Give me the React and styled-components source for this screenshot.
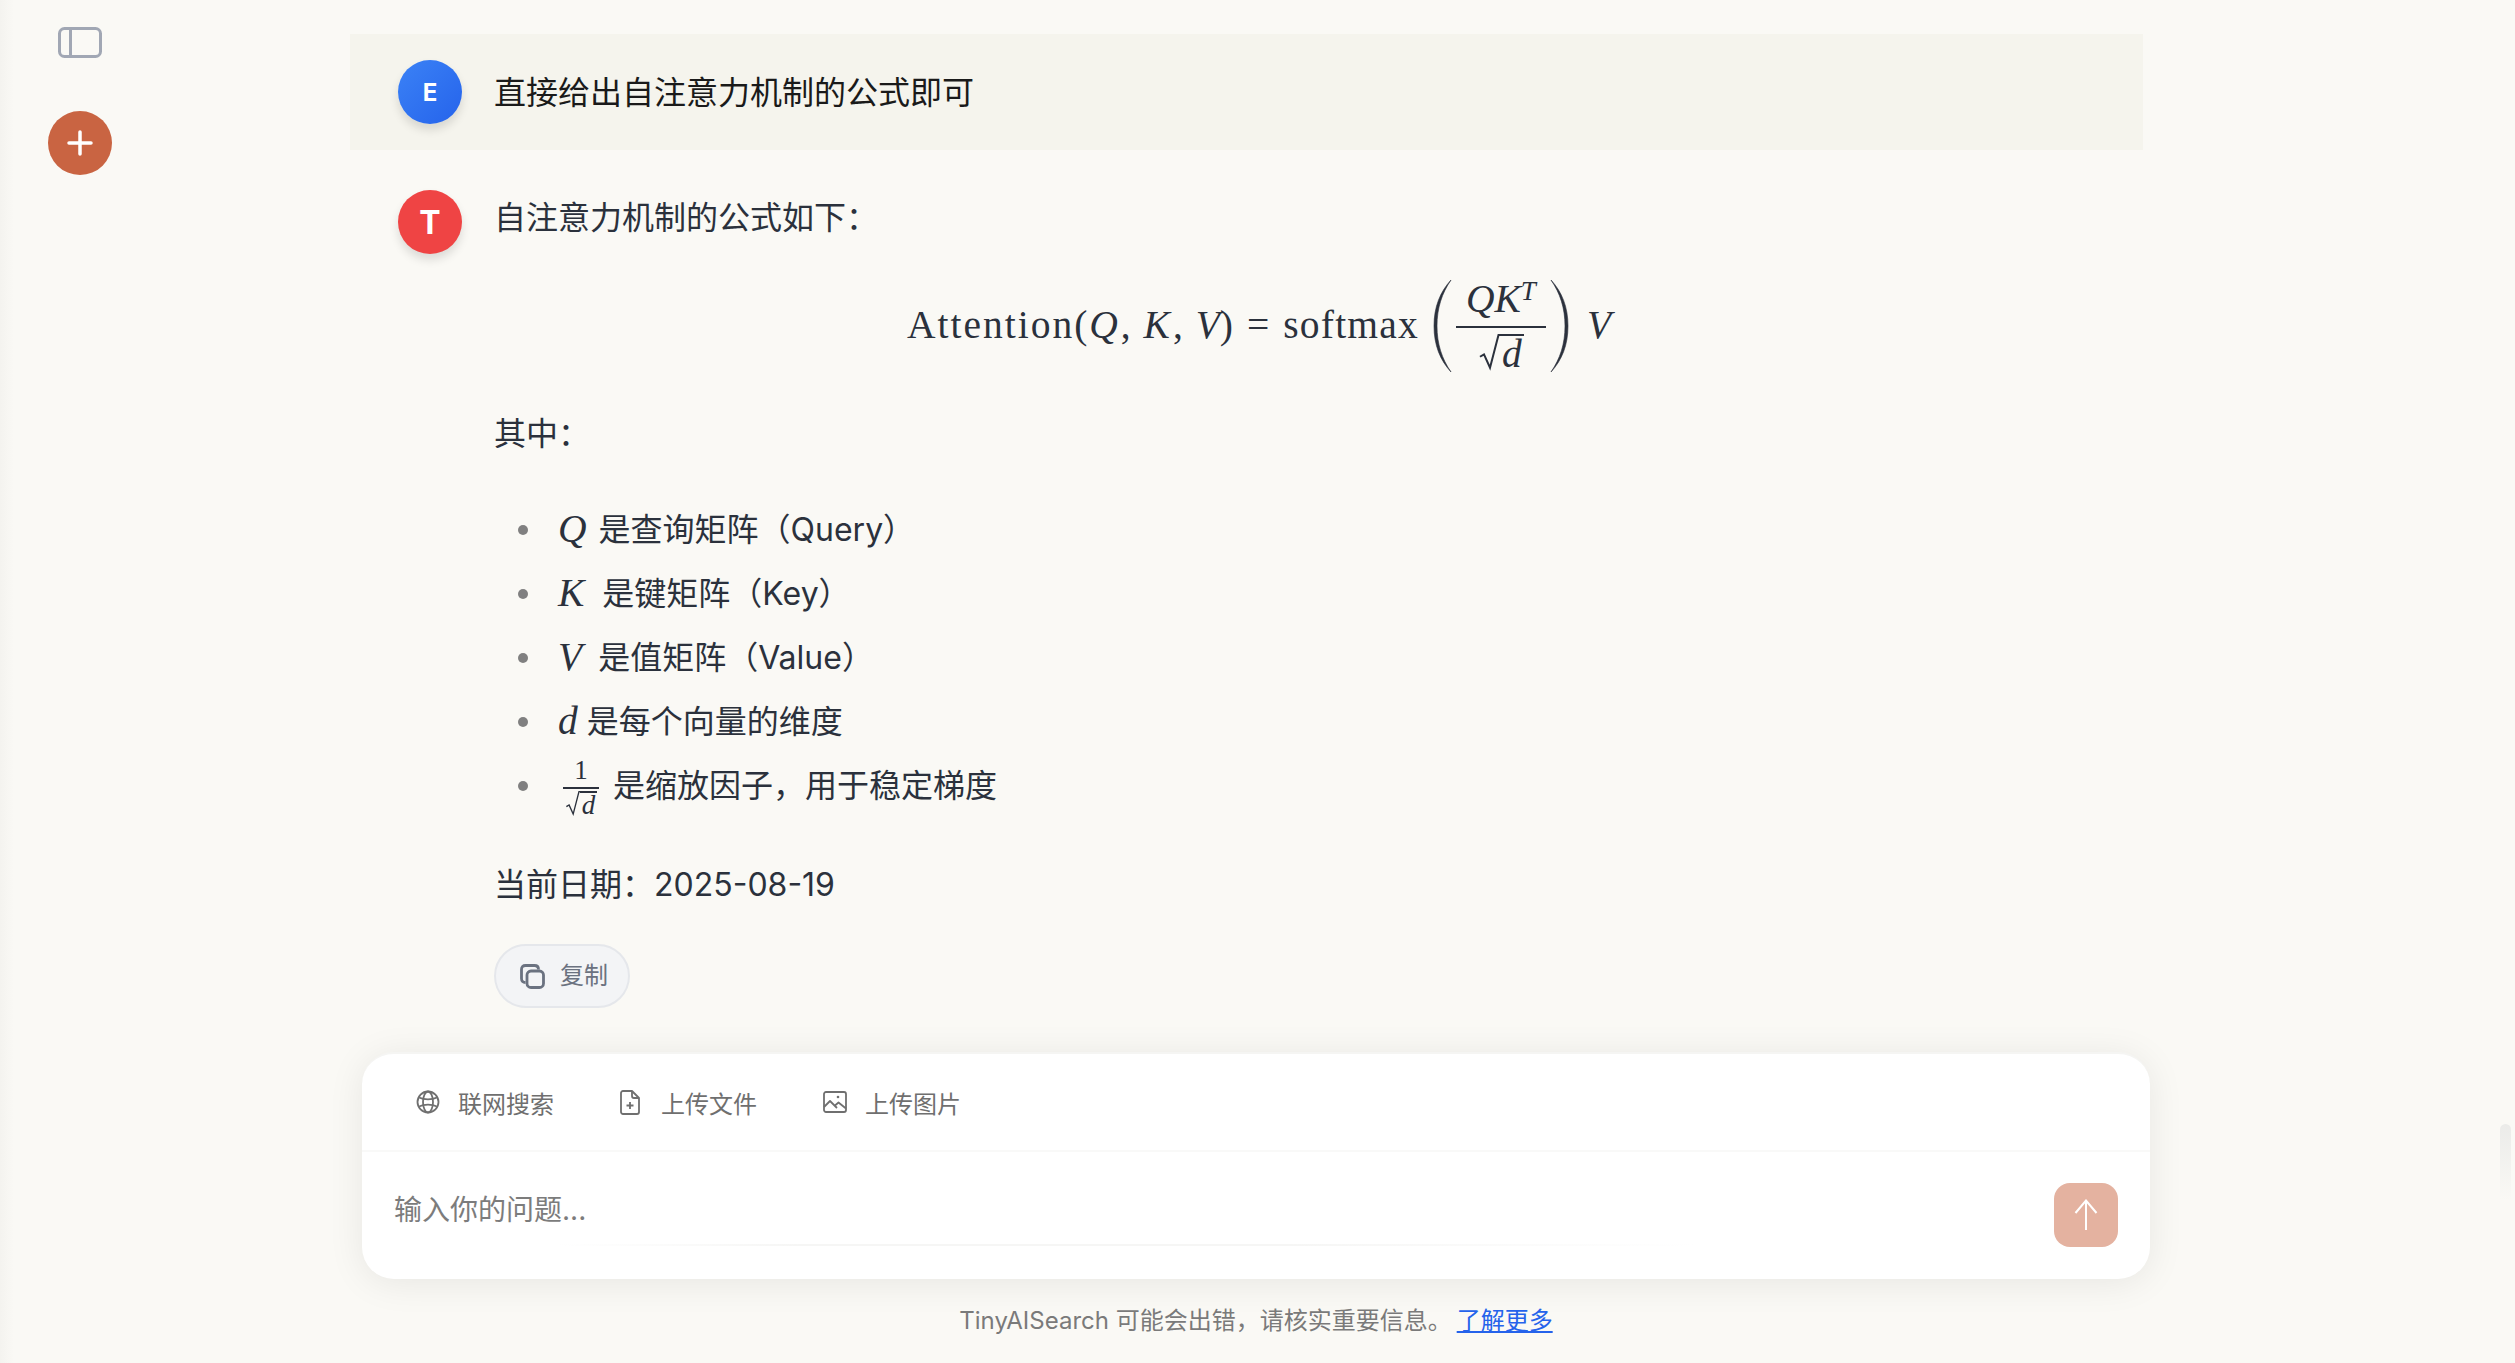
import React from "react";
import styled, { createGlobalStyle } from "styled-components";

const GlobalStyle = createGlobalStyle`
  html, body {
    margin: 0;
    padding: 0;
    height: 100%;
    background: #faf9f5;
    overflow: hidden;
  }
  body {
    font-family: Inter, "Noto Sans CJK SC", sans-serif;
    color: #1f2937;
  }
  #root { height: 100%; }
  * { box-sizing: border-box; }
`;

const Page = styled.div`
  position: relative;
  display: flex;
  width: 100%;
  height: 100vh;
  overflow: hidden;
  background: #faf9f5;
`;

const Sidebar = styled.aside`
  flex: 0 0 160px;
  display: flex;
  flex-direction: column;
  align-items: center;
  padding-top: 27px;
  gap: 53px;
  background: linear-gradient(to right, #f4f3ef 0, #faf9f5 14px);
`;

const ToggleButton = styled.div`
  display: flex;
  height: 31px;
  color: #a1a7b4;
`;

const NewChatButton = styled.div`
  width: 64px;
  height: 64px;
  border-radius: 50%;
  background: #c96442;
  color: #fff;
  display: flex;
  align-items: center;
  justify-content: center;
`;

const Main = styled.main`
  flex: 1;
  min-width: 0;
  display: flex;
  flex-direction: column;
`;

const ChatArea = styled.div`
  flex: 1;
  min-height: 0;
  padding: 34px 0 0 190px;
`;

const UserBanner = styled.div`
  width: 1793px;
  height: 116px;
  padding: 26px 48px;
  display: flex;
  gap: 32px;
  background: #f5f4ed;
`;

const Avatar = styled.div`
  flex: 0 0 64px;
  width: 64px;
  height: 64px;
  border-radius: 50%;
  display: flex;
  align-items: center;
  justify-content: center;
  color: #fff;
  font-weight: 700;
  font-size: ${(p) => p.$size}px;
  background: ${(p) => p.$bg};
  box-shadow: 0 6px 10px rgba(0, 0, 0, 0.12);
`;

const UserText = styled.div`
  font-size: 32px;
  line-height: 64px;
  color: #1a1a1a;
  padding-top: 1px;
`;

const AnswerRow = styled.div`
  display: flex;
  gap: 32px;
  padding: 40px 48px 0;
`;

const AnswerBody = styled.div`
  width: 1536px;
  font-size: 32px;
  line-height: 52px;
  color: #2b313c;
  padding-top: 2px;
`;

const Para = styled.p`
  margin: ${(p) => p.$top || 0}px 0 0;
`;

const Formula = styled.div`
  height: 106px;
  margin-top: 26px;
  padding: 6px 6px 0 0;
  display: flex;
  align-items: center;
  justify-content: center;
  font-family: "Liberation Serif", serif;
  font-size: 39.5px;
  line-height: 1;
  color: #2b313c;
`;

const Roman = styled.span`
  letter-spacing: ${(p) => p.$spacing || 0}px;
  margin: 0 ${(p) => p.$side || 0}px;
  white-space: pre;
`;

const MathVar = styled.i`
  font-family: "Liberation Serif", serif;
  font-size: ${(p) => p.$size || 39.5}px;
  line-height: 1;
  margin-right: ${(p) => p.$gap || 0}px;
`;

const TrailingVar = styled(MathVar)`
  margin-left: 16px;
`;

const Sup = styled.i`
  font-size: 27px;
  align-self: flex-start;
  margin-top: -3px;
`;

const Fraction = styled.span`
  display: inline-flex;
  flex-direction: column;
  align-items: center;
  width: ${(p) => p.$width}px;
  margin: 0 ${(p) => p.$side || 0}px;
  font-family: "Liberation Serif", serif;
  line-height: 1;
`;

const Numerator = styled.span`
  display: flex;
  justify-content: center;
  align-items: flex-end;
  width: 100%;
  height: ${(p) => p.$height}px;
  border-bottom: 2px solid #2b313c;
  padding-bottom: ${(p) => p.$pad}px;
  font-size: ${(p) => p.$size}px;
`;

const Denominator = styled.span`
  display: flex;
  align-items: flex-start;
  justify-content: center;
  padding-top: ${(p) => p.$pad}px;
`;

const Radicand = styled.i`
  display: block;
  border-top: 2px solid #2b313c;
  font-size: ${(p) => p.$size}px;
  line-height: ${(p) => p.$line}px;
  padding: 0 2px;
`;

const FormulaBlock = styled.span`
  display: inline-flex;
  align-items: center;
  margin-left: ${(p) => p.$left || 0}px;
  padding-top: ${(p) => p.$top || 0}px;
`;

const BulletList = styled.ul`
  list-style: none;
  margin: 44px 0 0;
  padding: 0;
  display: flex;
  flex-direction: column;
  gap: 12px;
`;

const BulletItem = styled.li`
  display: flex;
  align-items: center;
  height: 52px;
  &::before {
    content: "";
    flex: 0 0 10px;
    width: 10px;
    height: 10px;
    border-radius: 50%;
    background: #808080;
    margin: 0 30px 0 24px;
  }
`;

const FractionNote = styled.span`
  margin-left: 14px;
`;

const CopyButton = styled.div`
  display: inline-flex;
  align-items: center;
  gap: 15px;
  height: 64px;
  margin-top: 33px;
  padding: 0 20px 0 24px;
  border: 2px solid #e5e7eb;
  border-radius: 32px;
  background: #f3f4f6;
  color: #6b7280;
  font-size: 24px;
`;

const InputArea = styled.div`
  flex: 0 0 311px;
  width: 1788px;
  margin-left: 202px;
`;

const InputCard = styled.div`
  height: 227px;
  border-radius: 32px;
  background: #fff;
  border-top: 2px solid #f5f5f3;
  box-shadow: 0 4px 36px rgba(0, 0, 0, 0.08);
  display: flex;
  flex-direction: column;
`;

const ToolRow = styled.div`
  height: 98px;
  flex: 0 0 98px;
  display: flex;
  align-items: center;
  gap: 66px;
  padding-left: 54px;
  border-bottom: 2px solid #f9f9f8;
`;

const ToolButton = styled.div`
  display: flex;
  align-items: center;
  gap: ${(p) => p.$gap}px;
  font-size: 24px;
  color: #6f6f6f;
`;

const InputRow = styled.div`
  flex: 1;
  display: flex;
  padding: 31px 32px 31px 32px;
  gap: 32px;
`;

const Placeholder = styled.div`
  flex: 1;
  height: 63px;
  font-size: 28px;
  line-height: 54px;
  color: #7c7c7c;
  border-bottom: 2px solid;
  border-image: linear-gradient(to right, #fff 10%, #f6f6f5 25%, #f6f6f5 55%, #fff 80%) 1;
`;

const SendButton = styled.div`
  flex: 0 0 64px;
  height: 64px;
  border-radius: 16px;
  background: #e4b2a0;
  color: #fff;
  display: flex;
  align-items: center;
  justify-content: center;
`;

const Footer = styled.div`
  height: 78px;
  display: flex;
  align-items: center;
  justify-content: center;
  font-size: 24px;
  color: #7a7a7a;
`;

const FooterLink = styled.a`
  color: #2563eb;
  text-decoration: underline;
  margin-left: 5px;
`;

const ScrollThumb = styled.div`
  position: absolute;
  right: 4px;
  top: 1124px;
  width: 11px;
  height: 76px;
  border-radius: 6px 6px 0 0;
  background: linear-gradient(to bottom, #ebebe9, #faf9f5);
`;

const FlippableSvg = styled.svg`
  flex-shrink: 0;
  transform: ${(p) => (p.$flip ? "scaleX(-1)" : "none")};
`;

function BigParen({ flip }) {
  return (
    <FlippableSvg $flip={flip} width="22" height="94" viewBox="0 0 22 94">
      <path d="M20 1C9 13 3 28 3 47s6 34 17 46C11 80 6 65 6 47S11 14 20 1z" fill="#2b313c" stroke="#2b313c" strokeWidth="0.6" />
    </FlippableSvg>
  );
}

function Radical({ width, height }) {
  return (
    <FlippableSvg width={width} height={height} viewBox="0 0 22 40" preserveAspectRatio="none">
      <path d="M2 24l4-2.500 6 14L20.500 1H22" fill="none" stroke="#2b313c" strokeWidth="2" />
    </FlippableSvg>
  );
}

function PanelIcon() {
  return (
    <svg width="44" height="31" viewBox="0 0 44 31" fill="none" stroke="currentColor" strokeWidth="3">
      <rect x="1.500" y="1.500" width="41" height="28" rx="5" />
      <path d="M12.500 1.500v28" />
    </svg>
  );
}

function PlusIcon() {
  return (
    <svg width="26" height="26" viewBox="0 0 26 26" stroke="currentColor" strokeWidth="3.500" strokeLinecap="round">
      <path d="M13 2v22M2 13h22" />
    </svg>
  );
}

function CopyIcon() {
  return (
    <svg width="25" height="25" viewBox="0 0 25 25" fill="none" stroke="#6b7280" strokeWidth="2.800" strokeLinejoin="round">
      <path d="M5.500 18.500C3 18.500 1.500 17 1.500 14.500V5.500C1.500 3 3 1.500 5.500 1.500h9c2.500 0 4 1.500 4 4" />
      <rect x="7" y="7" width="16.500" height="16.500" rx="4" />
    </svg>
  );
}

function GlobeIcon() {
  return (
    <svg width="24" height="24" viewBox="0 0 24 24" fill="none" stroke="currentColor" strokeWidth="1.800">
      <circle cx="12" cy="12" r="10.500" />
      <ellipse cx="12" cy="12" rx="5" ry="10.500" />
      <path d="M3 7.500C8 10 16 10 21 7.500M3 16.500C8 14 16 14 21 16.500" />
    </svg>
  );
}

function FilePlusIcon() {
  return (
    <svg width="20" height="25" viewBox="0 0 20 25" fill="none" stroke="currentColor" strokeWidth="1.800" strokeLinejoin="round">
      <path d="M3 1h9l7 7v14a2 2 0 0 1-2 2H3a2 2 0 0 1-2-2V3a2 2 0 0 1 2-2z" />
      <path d="M12 1v5a2 2 0 0 0 2 2h5M10 12v7M6.500 15.500h7" />
    </svg>
  );
}

function ImageIcon() {
  return (
    <svg width="24" height="24" viewBox="0 0 24 24" fill="none" stroke="currentColor" strokeWidth="1.800" strokeLinejoin="round">
      <rect x="1" y="2" width="22" height="20" rx="2" />
      <path d="M1 17l6-6 7 7M12 15.500l3.500-3 7.500 6" />
      <circle cx="15" cy="7" r="1.300" fill="currentColor" stroke="none" />
    </svg>
  );
}

function ArrowIcon() {
  return (
    <svg width="24" height="32" viewBox="0 0 24 32" fill="none" stroke="currentColor" strokeWidth="2">
      <path d="M12 31V2M1.500 14L12 1.500 22.500 14" />
    </svg>
  );
}

function SmallSqrtFraction() {
  return (
    <Fraction $width={36}>
      <Numerator $height={26} $pad={3} $size={27}>1</Numerator>
      <Denominator $pad={2}>
        <Radical width={15} height={26} />
        <Radicand $size={27} $line={24}>d</Radicand>
      </Denominator>
    </Fraction>
  );
}

const listItems = [
  { math: "Q", gap: 12, text: "是查询矩阵（Query）" },
  { math: "K", gap: 18, text: "是键矩阵（Key）" },
  { math: "V", gap: 16, text: "是值矩阵（Value）" },
  { math: "d", gap: 9, text: "是每个向量的维度" },
];

export default function App() {
  return (
    <Page>
      <GlobalStyle />
      <Sidebar>
        <ToggleButton>
          <PanelIcon />
        </ToggleButton>
        <NewChatButton>
          <PlusIcon />
        </NewChatButton>
      </Sidebar>
      <Main>
        <ChatArea>
          <UserBanner>
            <Avatar $bg="linear-gradient(135deg, #3b82f6, #2563eb)" $size={24}>E</Avatar>
            <UserText>直接给出自注意力机制的公式即可</UserText>
          </UserBanner>
          <AnswerRow>
            <Avatar $bg="#ef4444" $size={32}>T</Avatar>
            <AnswerBody>
              <Para>自注意力机制的公式如下：</Para>
              <Formula>
                <Roman $spacing={2}>Attention(</Roman>
                <MathVar>Q</MathVar>
                <Roman $side={3}>, </Roman>
                <MathVar>K</MathVar>
                <Roman $side={3}>, </Roman>
                <MathVar>V</MathVar>
                <Roman>)</Roman>
                <Roman $side={14}>=</Roman>
                <Roman $spacing={1.200}>softmax</Roman>
                <FormulaBlock $left={12}>
                  <BigParen />
                  <Fraction $width={90} $side={3}>
                    <Numerator $height={47} $pad={6} $size={39.500}>
                      <MathVar>QK</MathVar>
                      <Sup>T</Sup>
                    </Numerator>
                    <Denominator $pad={6}>
                      <Radical width={22} height={38} />
                      <Radicand $size={39.500} $line={36}>d</Radicand>
                    </Denominator>
                  </Fraction>
                  <BigParen flip />
                </FormulaBlock>
                <TrailingVar>V</TrailingVar>
              </Formula>
              <Para $top={32}>其中：</Para>
              <BulletList>
                {listItems.map((item) => (
                  <BulletItem key={item.math}>
                    <MathVar $gap={item.gap}>{item.math}</MathVar>
                    {item.text}
                  </BulletItem>
                ))}
                <BulletItem>
                  <FormulaBlock $left={5} $top={8}>
                    <SmallSqrtFraction />
                  </FormulaBlock>
                  <FractionNote>是缩放因子，用于稳定梯度</FractionNote>
                </BulletItem>
              </BulletList>
              <Para $top={47}>当前日期：2025-08-19</Para>
              <CopyButton>
                <CopyIcon />
                复制
              </CopyButton>
            </AnswerBody>
          </AnswerRow>
        </ChatArea>
        <InputArea>
          <InputCard>
            <ToolRow>
              <ToolButton $gap={18}>
                <GlobeIcon />
                联网搜索
              </ToolButton>
              <ToolButton $gap={21}>
                <FilePlusIcon />
                上传文件
              </ToolButton>
              <ToolButton $gap={18}>
                <ImageIcon />
                上传图片
              </ToolButton>
            </ToolRow>
            <InputRow>
              <Placeholder>输入你的问题...</Placeholder>
              <SendButton>
                <ArrowIcon />
              </SendButton>
            </InputRow>
          </InputCard>
          <Footer>
            TinyAISearch 可能会出错，请核实重要信息。
            <FooterLink>了解更多</FooterLink>
          </Footer>
        </InputArea>
      </Main>
      <ScrollThumb />
    </Page>
  );
}
